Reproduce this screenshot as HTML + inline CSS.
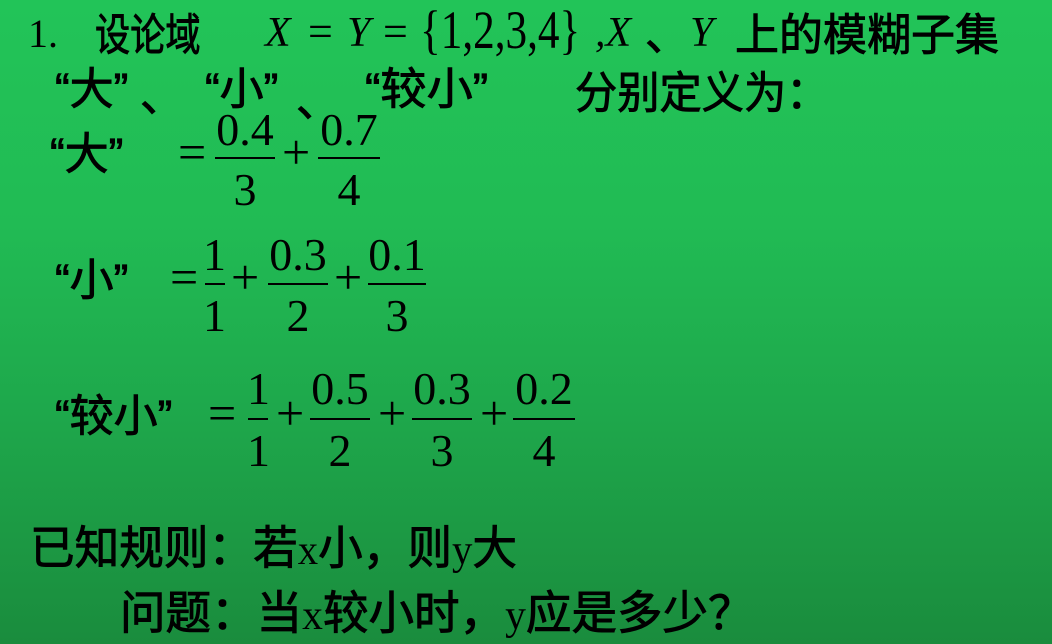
<!DOCTYPE html>
<html><head><meta charset="utf-8"><style>
body{margin:0;width:1052px;height:644px;overflow:hidden;background:linear-gradient(180deg,#22c458 0%,#21bb54 35%,#1ea74b 65%,#1a8c3d 100%);position:relative;font-family:"Liberation Sans","Noto Sans CJK SC",sans-serif;color:#000}
.a{position:absolute;white-space:nowrap;line-height:1;transform-origin:left top}
.c{font-family:"Liberation Sans","Noto Sans CJK SC",sans-serif;font-size:44px;-webkit-text-stroke:0.9px #000}
.n{font-family:"Noto Sans CJK SC",sans-serif;font-size:44px;-webkit-text-stroke:0.9px #000}
.s{font-family:"Liberation Serif",serif;font-weight:normal;-webkit-text-stroke:0}
.i{font-style:italic}
.o{font-family:"Liberation Serif",serif;font-size:50px}
.f{position:absolute;text-align:center;font-family:"Liberation Serif",serif;font-size:46px;line-height:1}
.ln{position:absolute;height:2px;background:#000}
</style></head><body>
<!-- line 1 -->
<div class="a s" style="left:28px;top:14px;font-size:40px">1.</div>
<div class="a n" style="left:95px;top:9px;transform:scaleX(0.8)">设论域</div>
<div class="a s i" style="left:265px;top:12px;font-size:42px">X</div>
<div class="a s" style="left:308px;top:10px;font-size:44px">=</div>
<div class="a s i" style="left:347px;top:12px;font-size:42px">Y</div>
<div class="a s" style="left:383px;top:10px;font-size:44px">=</div>
<div class="a s" style="left:420px;top:3px;font-size:54px;transform:scaleX(0.8)">{1,2,3,4}</div>
<div class="a s i" style="left:595px;top:12px;font-size:42px">,X</div>
<div class="a n" style="left:645px;top:9px">、</div>
<div class="a s i" style="left:690px;top:12px;font-size:42px">Y</div>
<div class="a n" style="left:735px;top:9px">上的模糊子集</div>
<!-- line 2 -->
<div class="a c" style="left:55px;top:68px">“大”</div>
<div class="a n" style="left:140px;top:70px">、</div>
<div class="a c" style="left:205px;top:68px">“小”</div>
<div class="a n" style="left:296px;top:75px">、</div>
<div class="a c" style="left:365px;top:68px;transform:scaleX(1.05)">“较小”</div>
<div class="a n" style="left:575px;top:67px;transform:scaleX(0.96)">分别定义为：</div>
<!-- 大 -->
<div class="a c" style="left:50px;top:133px">“大”</div>
<div class="a o" style="left:178px;top:127px">=</div>
<div class="f" style="left:215px;width:60px;top:107px">0.4</div><div class="ln" style="left:215px;width:60px;top:157px"></div><div class="f" style="left:215px;width:60px;top:167px">3</div>
<div class="a o" style="left:282px;top:127px">+</div>
<div class="f" style="left:318px;width:62px;top:107px">0.7</div><div class="ln" style="left:318px;width:62px;top:157px"></div><div class="f" style="left:318px;width:62px;top:167px">4</div>
<!-- 小 -->
<div class="a c" style="left:55px;top:259px">“小”</div>
<div class="a o" style="left:170px;top:252px">=</div>
<div class="f" style="left:203px;width:22px;top:232px">1</div><div class="ln" style="left:205px;width:20px;top:283px"></div><div class="f" style="left:203px;width:22px;top:293px">1</div>
<div class="a o" style="left:231px;top:252px">+</div>
<div class="f" style="left:268px;width:60px;top:232px">0.3</div><div class="ln" style="left:268px;width:60px;top:283px"></div><div class="f" style="left:268px;width:60px;top:293px">2</div>
<div class="a o" style="left:334px;top:252px">+</div>
<div class="f" style="left:368px;width:58px;top:232px">0.1</div><div class="ln" style="left:368px;width:58px;top:283px"></div><div class="f" style="left:368px;width:58px;top:293px">3</div>
<!-- 较小 -->
<div class="a c" style="left:55px;top:395px">“较小”</div>
<div class="a o" style="left:208px;top:388px">=</div>
<div class="f" style="left:247px;width:22px;top:366px">1</div><div class="ln" style="left:248px;width:20px;top:418px"></div><div class="f" style="left:247px;width:22px;top:428px">1</div>
<div class="a o" style="left:276px;top:388px">+</div>
<div class="f" style="left:310px;width:60px;top:366px">0.5</div><div class="ln" style="left:310px;width:60px;top:418px"></div><div class="f" style="left:310px;width:60px;top:428px">2</div>
<div class="a o" style="left:378px;top:388px">+</div>
<div class="f" style="left:412px;width:60px;top:366px">0.3</div><div class="ln" style="left:412px;width:60px;top:418px"></div><div class="f" style="left:412px;width:60px;top:428px">3</div>
<div class="a o" style="left:480px;top:388px">+</div>
<div class="f" style="left:513px;width:62px;top:366px">0.2</div><div class="ln" style="left:513px;width:62px;top:418px"></div><div class="f" style="left:513px;width:62px;top:428px">4</div>
<!-- bottom -->
<div class="a n" style="left:30px;top:522px;font-size:46px;transform:scaleX(0.97)">已知规则：若<span class="s" style="font-size:42px">x</span>小，则<span class="s" style="font-size:42px">y</span>大</div>
<div class="a n" style="left:120px;top:587px;font-size:46px;transform:scaleX(0.99)">问题：当<span class="s" style="font-size:42px">x</span>较小时，<span class="s" style="font-size:42px">y</span>应是多少？</div>
</body></html>
